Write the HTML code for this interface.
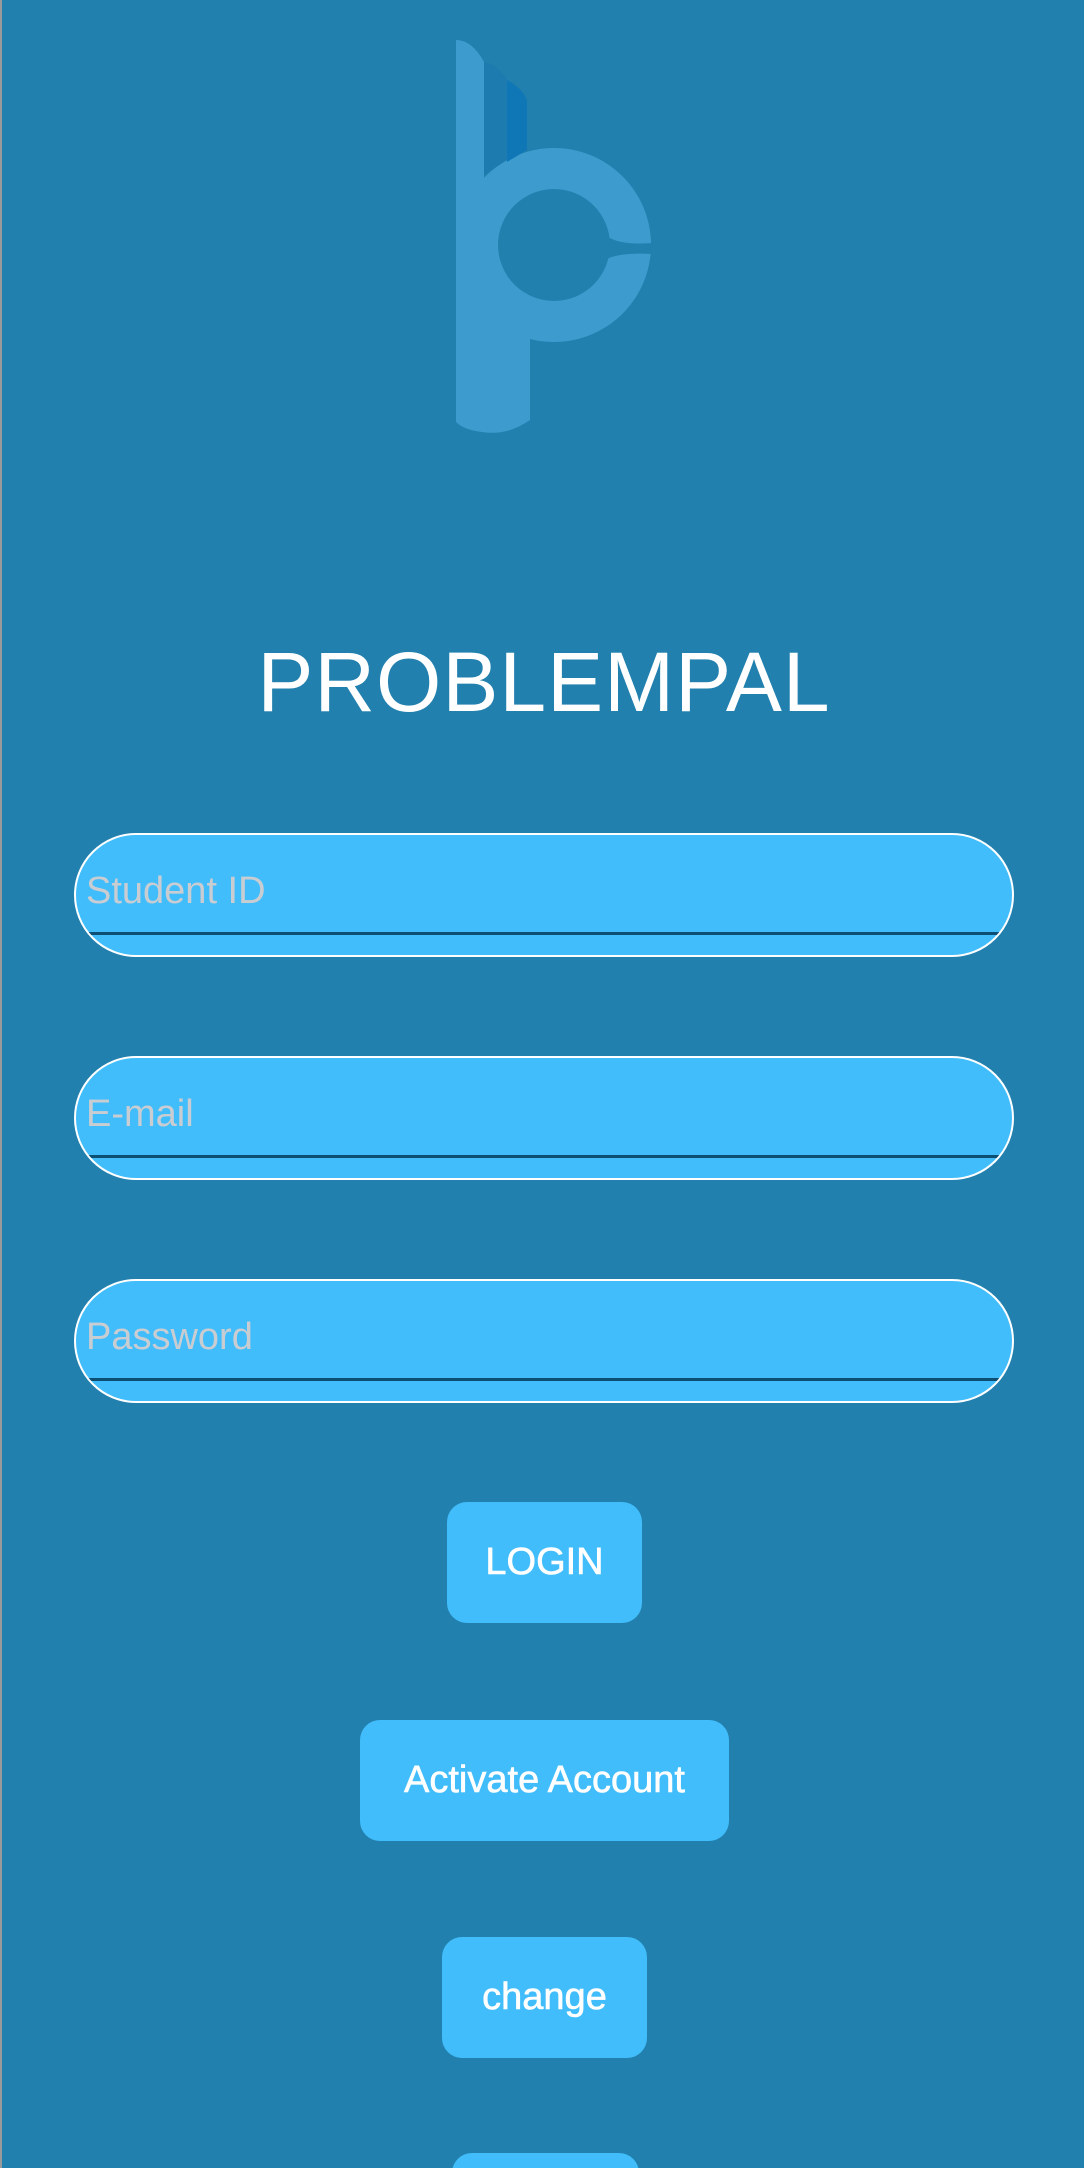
<!DOCTYPE html>
<html><head><meta charset="utf-8"><style>
html,body{margin:0;padding:0;background:#2180ae}
#w{width:1084px;height:2168px;background:#2180ae;position:relative;overflow:hidden;font-family:"Liberation Sans",sans-serif;border-left:2px solid #9a9a9a;box-sizing:border-box}
.title{position:absolute;left:0;width:1084px;top:632px;text-align:center;color:#fff;font-size:84px;line-height:100px;letter-spacing:1px}
.field{position:absolute;left:72px;width:940px;height:124px;box-sizing:border-box;border:2px solid #fff;border-radius:62px;background:#42bdfb;overflow:hidden}
.field .ph{position:absolute;left:10px;top:34px;font-size:38px;color:#c9cdd2;line-height:44px}
.field .ln{position:absolute;left:0;right:0;top:97px;height:3px;background:#0d4f73}
.btn{position:absolute;height:121px;border-radius:20px;background:#42bdfb;color:#fff;text-align:center;line-height:121px;font-size:38px;-webkit-text-stroke:0.6px #fff}
</style></head><body><div id="w">
<svg width="1084" height="450" style="position:absolute;left:0;top:0">
<path d="M454 40 Q470 40 482 62 L482 300 L528 300 L528 420 Q505 436 480 432 Q462 430 454 422 Z" fill="#3d9ccd"/>
<circle cx="552" cy="245" r="97" fill="#3d9ccd"/>
<circle cx="552" cy="245" r="56" fill="#2180ae"/>
<path d="M600 232 Q612 246 650 243 L650 254 Q612 252 600 262 Z" fill="#2180ae"/>
<path d="M482 62 Q496 64 505 80 L505 160 L482 175 Z" fill="#1d7bb0"/>
<path d="M505 80 Q520 88 525 100 L525 150 L505 162 Z" fill="#0f77b6"/>
</svg>
<div class="title">PROBLEMPAL</div>
<div class="field" style="top:833px"><div class="ph">Student ID</div><div class="ln"></div></div>
<div class="field" style="top:1056px"><div class="ph">E-mail</div><div class="ln"></div></div>
<div class="field" style="top:1279px"><div class="ph">Password</div><div class="ln"></div></div>
<div class="btn" style="left:445px;width:195px;top:1502px">LOGIN</div>
<div class="btn" style="left:358px;width:369px;top:1720px">Activate Account</div>
<div class="btn" style="left:440px;width:205px;top:1937px">change</div>
<div class="btn" style="left:450px;width:187px;top:2153px"></div>
</div></body></html>
